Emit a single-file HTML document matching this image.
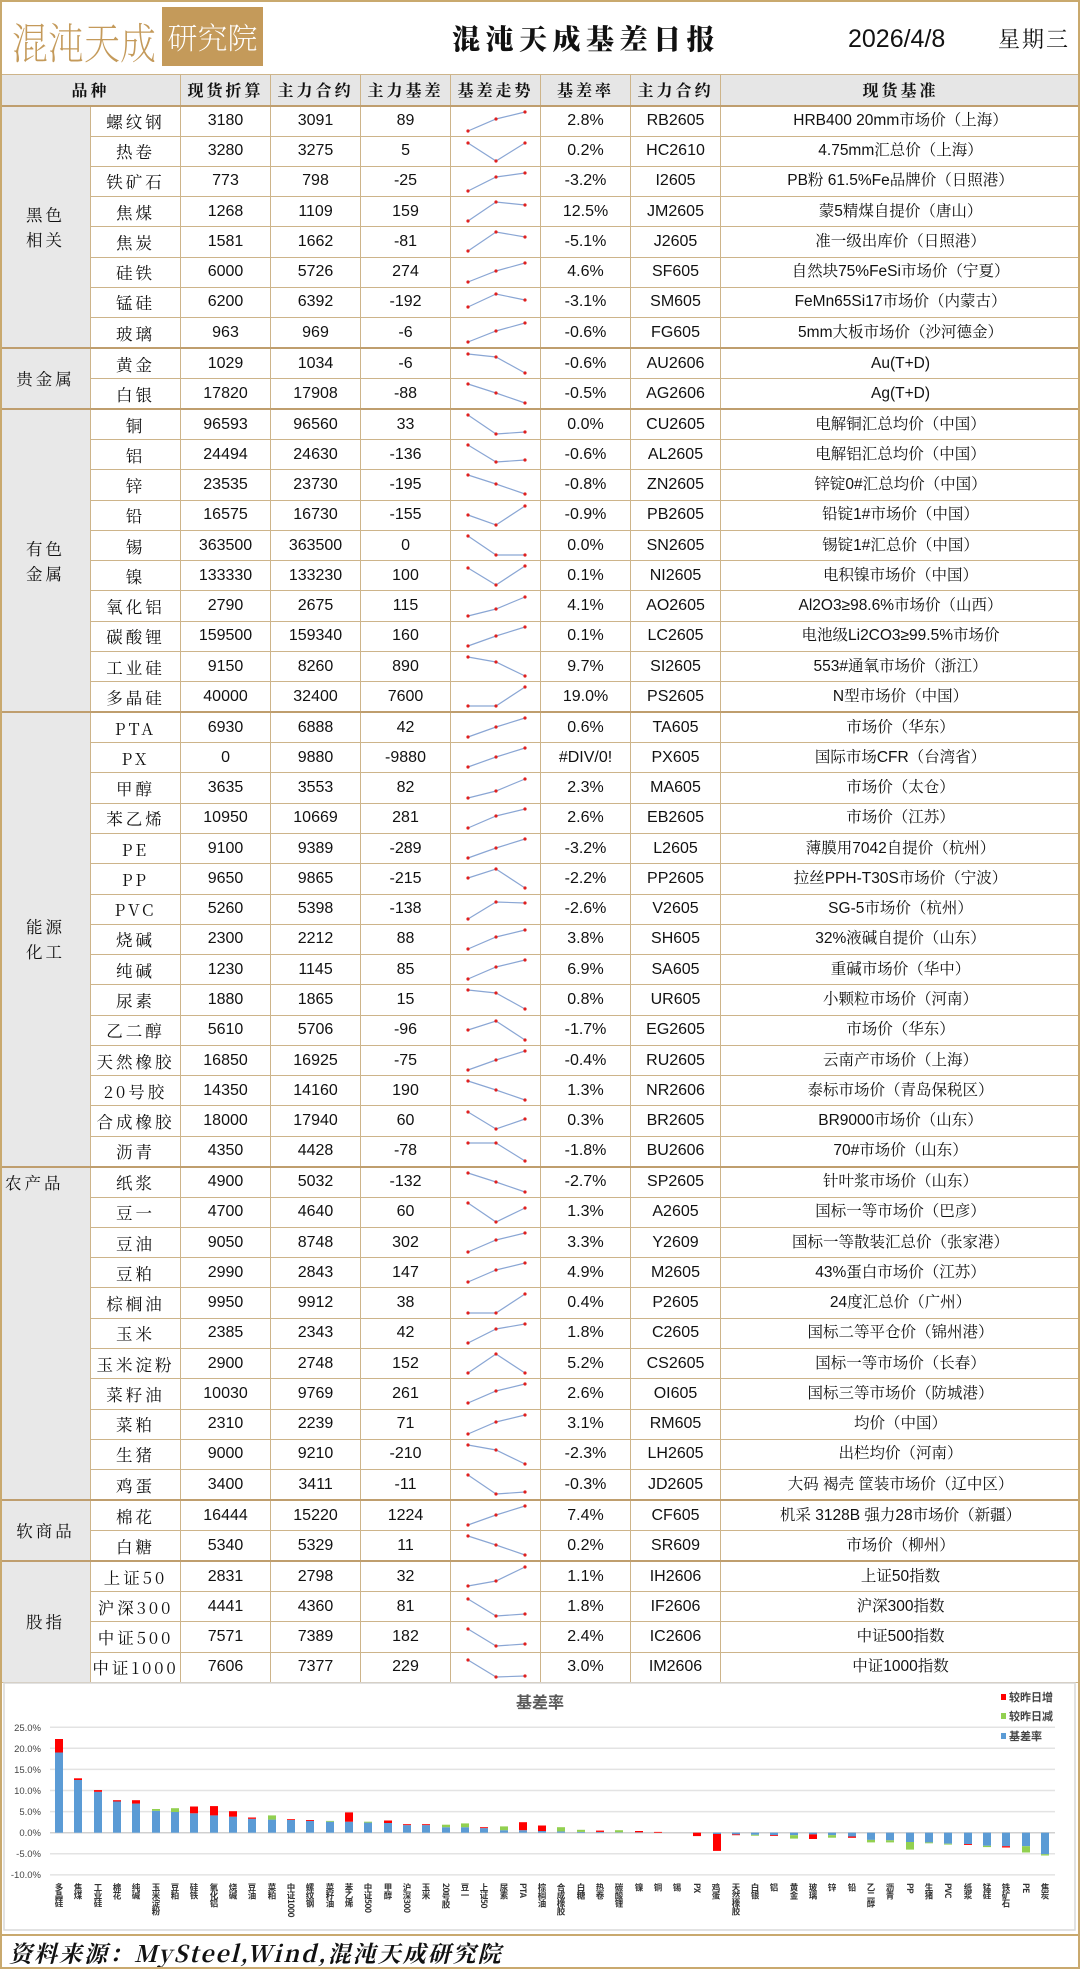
<!DOCTYPE html>
<html><head><meta charset="utf-8">
<style>
*{margin:0;padding:0;box-sizing:border-box}
body{width:1080px;height:1969px;background:#fff;position:relative;overflow:hidden;font-family:"Liberation Sans","Noto Sans CJK SC",sans-serif;color:#111}
#frame{position:absolute;left:0;top:0;width:1080px;height:1969px;border:2px solid #c9a96e;pointer-events:none;z-index:5}
.logo1{position:absolute;left:12px;top:12px;font-family:"Noto Serif CJK SC",serif;font-size:36px;font-weight:200;color:#c49a5a;letter-spacing:0;line-height:50px;transform:scaleY(1.2);transform-origin:top}
.logo2{position:absolute;left:162px;top:7px;width:101px;height:59px;background:#c49a5a;color:#fff;font-family:"Noto Serif CJK SC",serif;font-size:30px;font-weight:200;line-height:59px;text-align:center;letter-spacing:0}
.title{position:absolute;left:452px;top:18px;font-family:"Noto Serif CJK SC",serif;font-weight:900;font-size:28px;letter-spacing:5.5px;line-height:40px}
.date{position:absolute;left:848px;top:22px;font-size:25px;line-height:34px}
.week{position:absolute;left:998px;top:22px;font-family:"Noto Serif CJK SC",serif;font-size:22px;line-height:34px;letter-spacing:2px}
table{position:absolute;left:0;top:74px;width:1080px;border-collapse:collapse;table-layout:fixed}
td,th{border:1.5px solid #cdb48a;text-align:center;vertical-align:middle;font-size:16px;white-space:nowrap;overflow:hidden;padding:0;line-height:18px}
th{height:31px;background:#e6e6e6;font-family:"Noto Serif CJK SC",serif;font-weight:700;font-size:16px;letter-spacing:3px}
tbody tr{height:30.27px}
td.n{font-family:"Noto Serif CJK SC",serif;letter-spacing:3px;font-size:16.5px}
td.c{background:#e8e8e8;font-family:"Noto Serif CJK SC",serif;font-size:16.5px;letter-spacing:3px;line-height:25px}
td.b{font-family:"Liberation Sans","Noto Serif CJK SC",sans-serif;font-size:15.5px}
tr.g td{border-top:2.5px solid #bf9e6e}
td.t svg{display:block;width:90px;height:29px}
td.t polyline{fill:none;stroke:#8aa6d4;stroke-width:1.2;marker-start:url(#m);marker-mid:url(#m);marker-end:url(#m)}
.chart{position:absolute;left:0;top:1682px}
.foot{position:absolute;left:9px;top:1938px;font-family:"Noto Serif CJK SC",serif;font-style:italic;font-weight:700;font-size:23px;letter-spacing:2px;line-height:30px}
.fl{position:absolute;left:0;top:1934px;width:1080px;border-top:2px solid #c9a96e}
</style></head><body>
<svg width="0" height="0" style="position:absolute"><defs><marker id="m" markerWidth="4" markerHeight="4" refX="2" refY="2" markerUnits="userSpaceOnUse"><circle cx="2" cy="2" r="1.6" fill="#e0201f"/></marker></defs></svg>
<div id="frame"></div>
<div class="logo1">混沌天成</div>
<div class="logo2">研究院</div>
<div class="title">混沌天成基差日报</div>
<div class="date">2026/4/8</div>
<div class="week">星期三</div>
<table>
<colgroup><col style="width:90px"><col style="width:90px"><col style="width:90px"><col style="width:90px"><col style="width:90px"><col style="width:90px"><col style="width:90px"><col style="width:90px"><col style="width:360px"></colgroup>
<thead><tr><th colspan="2">品种</th><th>现货折算</th><th>主力合约</th><th>主力基差</th><th>基差走势</th><th>基差率</th><th>主力合约</th><th>现货基准</th></tr></thead>
<tbody>
<tr class="g"><td class="c" rowspan="8">黑色<br>相关</td><td class="n">螺纹钢</td><td>3180</td><td>3091</td><td>89</td><td class="t"><svg viewBox="0 0 90 29"><polyline points="17,24 45,12 74,5"/></svg></td><td>2.8%</td><td>RB2605</td><td class="b">HRB400 20mm市场价（上海）</td></tr>
<tr><td class="n">热卷</td><td>3280</td><td>3275</td><td>5</td><td class="t"><svg viewBox="0 0 90 29"><polyline points="17,6 45,24 74,6"/></svg></td><td>0.2%</td><td>HC2610</td><td class="b">4.75mm汇总价（上海）</td></tr>
<tr><td class="n">铁矿石</td><td>773</td><td>798</td><td>-25</td><td class="t"><svg viewBox="0 0 90 29"><polyline points="17,24 45,10 74,6"/></svg></td><td>-3.2%</td><td>I2605</td><td class="b">PB粉 61.5%Fe品牌价（日照港）</td></tr>
<tr><td class="n">焦煤</td><td>1268</td><td>1109</td><td>159</td><td class="t"><svg viewBox="0 0 90 29"><polyline points="17,24 45,5 74,8"/></svg></td><td>12.5%</td><td>JM2605</td><td class="b">蒙5精煤自提价（唐山）</td></tr>
<tr><td class="n">焦炭</td><td>1581</td><td>1662</td><td>-81</td><td class="t"><svg viewBox="0 0 90 29"><polyline points="17,24 45,5 74,10"/></svg></td><td>-5.1%</td><td>J2605</td><td class="b">准一级出库价（日照港）</td></tr>
<tr><td class="n">硅铁</td><td>6000</td><td>5726</td><td>274</td><td class="t"><svg viewBox="0 0 90 29"><polyline points="17,24 45,13 74,5"/></svg></td><td>4.6%</td><td>SF605</td><td class="b">自然块75%FeSi市场价（宁夏）</td></tr>
<tr><td class="n">锰硅</td><td>6200</td><td>6392</td><td>-192</td><td class="t"><svg viewBox="0 0 90 29"><polyline points="17,19 45,6 74,12"/></svg></td><td>-3.1%</td><td>SM605</td><td class="b">FeMn65Si17市场价（内蒙古）</td></tr>
<tr><td class="n">玻璃</td><td>963</td><td>969</td><td>-6</td><td class="t"><svg viewBox="0 0 90 29"><polyline points="17,24 45,13 74,5"/></svg></td><td>-0.6%</td><td>FG605</td><td class="b">5mm大板市场价（沙河德金）</td></tr>
<tr class="g"><td class="c" rowspan="2">贵金属</td><td class="n">黄金</td><td>1029</td><td>1034</td><td>-6</td><td class="t"><svg viewBox="0 0 90 29"><polyline points="17,5 45,8 74,24"/></svg></td><td>-0.6%</td><td>AU2606</td><td class="b">Au(T+D)</td></tr>
<tr><td class="n">白银</td><td>17820</td><td>17908</td><td>-88</td><td class="t"><svg viewBox="0 0 90 29"><polyline points="17,5 45,14 74,24"/></svg></td><td>-0.5%</td><td>AG2606</td><td class="b">Ag(T+D)</td></tr>
<tr class="g"><td class="c" rowspan="10">有色<br>金属</td><td class="n">铜</td><td>96593</td><td>96560</td><td>33</td><td class="t"><svg viewBox="0 0 90 29"><polyline points="17,5 45,24 74,22"/></svg></td><td>0.0%</td><td>CU2605</td><td class="b">电解铜汇总均价（中国）</td></tr>
<tr><td class="n">铝</td><td>24494</td><td>24630</td><td>-136</td><td class="t"><svg viewBox="0 0 90 29"><polyline points="17,5 45,22 74,20"/></svg></td><td>-0.6%</td><td>AL2605</td><td class="b">电解铝汇总均价（中国）</td></tr>
<tr><td class="n">锌</td><td>23535</td><td>23730</td><td>-195</td><td class="t"><svg viewBox="0 0 90 29"><polyline points="17,5 45,14 74,24"/></svg></td><td>-0.8%</td><td>ZN2605</td><td class="b">锌锭0#汇总均价（中国）</td></tr>
<tr><td class="n">铅</td><td>16575</td><td>16730</td><td>-155</td><td class="t"><svg viewBox="0 0 90 29"><polyline points="17,14 45,24 74,5"/></svg></td><td>-0.9%</td><td>PB2605</td><td class="b">铅锭1#市场价（中国）</td></tr>
<tr><td class="n">锡</td><td>363500</td><td>363500</td><td>0</td><td class="t"><svg viewBox="0 0 90 29"><polyline points="17,5 45,24 74,24"/></svg></td><td>0.0%</td><td>SN2605</td><td class="b">锡锭1#汇总价（中国）</td></tr>
<tr><td class="n">镍</td><td>133330</td><td>133230</td><td>100</td><td class="t"><svg viewBox="0 0 90 29"><polyline points="17,7 45,24 74,5"/></svg></td><td>0.1%</td><td>NI2605</td><td class="b">电积镍市场价（中国）</td></tr>
<tr><td class="n">氧化铝</td><td>2790</td><td>2675</td><td>115</td><td class="t"><svg viewBox="0 0 90 29"><polyline points="17,24 45,17 74,5"/></svg></td><td>4.1%</td><td>AO2605</td><td class="b">Al2O3≥98.6%市场价（山西）</td></tr>
<tr><td class="n">碳酸锂</td><td>159500</td><td>159340</td><td>160</td><td class="t"><svg viewBox="0 0 90 29"><polyline points="17,24 45,14 74,5"/></svg></td><td>0.1%</td><td>LC2605</td><td class="b">电池级Li2CO3≥99.5%市场价</td></tr>
<tr><td class="n">工业硅</td><td>9150</td><td>8260</td><td>890</td><td class="t"><svg viewBox="0 0 90 29"><polyline points="17,5 45,10 74,24"/></svg></td><td>9.7%</td><td>SI2605</td><td class="b">553#通氧市场价（浙江）</td></tr>
<tr><td class="n">多晶硅</td><td>40000</td><td>32400</td><td>7600</td><td class="t"><svg viewBox="0 0 90 29"><polyline points="17,24 45,24 74,5"/></svg></td><td>19.0%</td><td>PS2605</td><td class="b">N型市场价（中国）</td></tr>
<tr class="g"><td class="c" rowspan="15">能源<br>化工</td><td class="n">PTA</td><td>6930</td><td>6888</td><td>42</td><td class="t"><svg viewBox="0 0 90 29"><polyline points="17,24 45,14 74,5"/></svg></td><td>0.6%</td><td>TA605</td><td class="b">市场价（华东）</td></tr>
<tr><td class="n">PX</td><td>0</td><td>9880</td><td>-9880</td><td class="t"><svg viewBox="0 0 90 29"><polyline points="17,24 45,14 74,5"/></svg></td><td>#DIV/0!</td><td>PX605</td><td class="b">国际市场CFR（台湾省）</td></tr>
<tr><td class="n">甲醇</td><td>3635</td><td>3553</td><td>82</td><td class="t"><svg viewBox="0 0 90 29"><polyline points="17,24 45,17 74,5"/></svg></td><td>2.3%</td><td>MA605</td><td class="b">市场价（太仓）</td></tr>
<tr><td class="n">苯乙烯</td><td>10950</td><td>10669</td><td>281</td><td class="t"><svg viewBox="0 0 90 29"><polyline points="17,24 45,12 74,5"/></svg></td><td>2.6%</td><td>EB2605</td><td class="b">市场价（江苏）</td></tr>
<tr><td class="n">PE</td><td>9100</td><td>9389</td><td>-289</td><td class="t"><svg viewBox="0 0 90 29"><polyline points="17,24 45,14 74,5"/></svg></td><td>-3.2%</td><td>L2605</td><td class="b">薄膜用7042自提价（杭州）</td></tr>
<tr><td class="n">PP</td><td>9650</td><td>9865</td><td>-215</td><td class="t"><svg viewBox="0 0 90 29"><polyline points="17,14 45,5 74,24"/></svg></td><td>-2.2%</td><td>PP2605</td><td class="b">拉丝PPH-T30S市场价（宁波）</td></tr>
<tr><td class="n">PVC</td><td>5260</td><td>5398</td><td>-138</td><td class="t"><svg viewBox="0 0 90 29"><polyline points="17,24 45,7 74,8"/></svg></td><td>-2.6%</td><td>V2605</td><td class="b">SG-5市场价（杭州）</td></tr>
<tr><td class="n">烧碱</td><td>2300</td><td>2212</td><td>88</td><td class="t"><svg viewBox="0 0 90 29"><polyline points="17,24 45,12 74,5"/></svg></td><td>3.8%</td><td>SH605</td><td class="b">32%液碱自提价（山东）</td></tr>
<tr><td class="n">纯碱</td><td>1230</td><td>1145</td><td>85</td><td class="t"><svg viewBox="0 0 90 29"><polyline points="17,24 45,12 74,5"/></svg></td><td>6.9%</td><td>SA605</td><td class="b">重碱市场价（华中）</td></tr>
<tr><td class="n">尿素</td><td>1880</td><td>1865</td><td>15</td><td class="t"><svg viewBox="0 0 90 29"><polyline points="17,5 45,8 74,24"/></svg></td><td>0.8%</td><td>UR605</td><td class="b">小颗粒市场价（河南）</td></tr>
<tr><td class="n">乙二醇</td><td>5610</td><td>5706</td><td>-96</td><td class="t"><svg viewBox="0 0 90 29"><polyline points="17,14 45,5 74,24"/></svg></td><td>-1.7%</td><td>EG2605</td><td class="b">市场价（华东）</td></tr>
<tr><td class="n">天然橡胶</td><td>16850</td><td>16925</td><td>-75</td><td class="t"><svg viewBox="0 0 90 29"><polyline points="17,24 45,14 74,5"/></svg></td><td>-0.4%</td><td>RU2605</td><td class="b">云南产市场价（上海）</td></tr>
<tr><td class="n">20号胶</td><td>14350</td><td>14160</td><td>190</td><td class="t"><svg viewBox="0 0 90 29"><polyline points="17,5 45,14 74,24"/></svg></td><td>1.3%</td><td>NR2606</td><td class="b">泰标市场价（青岛保税区）</td></tr>
<tr><td class="n">合成橡胶</td><td>18000</td><td>17940</td><td>60</td><td class="t"><svg viewBox="0 0 90 29"><polyline points="17,5 45,22 74,12"/></svg></td><td>0.3%</td><td>BR2605</td><td class="b">BR9000市场价（山东）</td></tr>
<tr><td class="n">沥青</td><td>4350</td><td>4428</td><td>-78</td><td class="t"><svg viewBox="0 0 90 29"><polyline points="17,6 45,6 74,24"/></svg></td><td>-1.8%</td><td>BU2606</td><td class="b">70#市场价（山东）</td></tr>
<tr class="g"><td class="c" rowspan="11" style="vertical-align:top;text-align:left;padding:2px 0 0 4px">农产品</td><td class="n">纸浆</td><td>4900</td><td>5032</td><td>-132</td><td class="t"><svg viewBox="0 0 90 29"><polyline points="17,5 45,14 74,24"/></svg></td><td>-2.7%</td><td>SP2605</td><td class="b">针叶浆市场价（山东）</td></tr>
<tr><td class="n">豆一</td><td>4700</td><td>4640</td><td>60</td><td class="t"><svg viewBox="0 0 90 29"><polyline points="17,5 45,24 74,10"/></svg></td><td>1.3%</td><td>A2605</td><td class="b">国标一等市场价（巴彦）</td></tr>
<tr><td class="n">豆油</td><td>9050</td><td>8748</td><td>302</td><td class="t"><svg viewBox="0 0 90 29"><polyline points="17,24 45,12 74,5"/></svg></td><td>3.3%</td><td>Y2609</td><td class="b">国标一等散装汇总价（张家港）</td></tr>
<tr><td class="n">豆粕</td><td>2990</td><td>2843</td><td>147</td><td class="t"><svg viewBox="0 0 90 29"><polyline points="17,24 45,12 74,5"/></svg></td><td>4.9%</td><td>M2605</td><td class="b">43%蛋白市场价（江苏）</td></tr>
<tr><td class="n">棕榈油</td><td>9950</td><td>9912</td><td>38</td><td class="t"><svg viewBox="0 0 90 29"><polyline points="17,24 45,24 74,5"/></svg></td><td>0.4%</td><td>P2605</td><td class="b">24度汇总价（广州）</td></tr>
<tr><td class="n">玉米</td><td>2385</td><td>2343</td><td>42</td><td class="t"><svg viewBox="0 0 90 29"><polyline points="17,24 45,10 74,5"/></svg></td><td>1.8%</td><td>C2605</td><td class="b">国标二等平仓价（锦州港）</td></tr>
<tr><td class="n">玉米淀粉</td><td>2900</td><td>2748</td><td>152</td><td class="t"><svg viewBox="0 0 90 29"><polyline points="17,24 45,5 74,24"/></svg></td><td>5.2%</td><td>CS2605</td><td class="b">国标一等市场价（长春）</td></tr>
<tr><td class="n">菜籽油</td><td>10030</td><td>9769</td><td>261</td><td class="t"><svg viewBox="0 0 90 29"><polyline points="17,24 45,12 74,5"/></svg></td><td>2.6%</td><td>OI605</td><td class="b">国标三等市场价（防城港）</td></tr>
<tr><td class="n">菜粕</td><td>2310</td><td>2239</td><td>71</td><td class="t"><svg viewBox="0 0 90 29"><polyline points="17,24 45,12 74,5"/></svg></td><td>3.1%</td><td>RM605</td><td class="b">均价（中国）</td></tr>
<tr><td class="n">生猪</td><td>9000</td><td>9210</td><td>-210</td><td class="t"><svg viewBox="0 0 90 29"><polyline points="17,5 45,10 74,24"/></svg></td><td>-2.3%</td><td>LH2605</td><td class="b">出栏均价（河南）</td></tr>
<tr><td class="n">鸡蛋</td><td>3400</td><td>3411</td><td>-11</td><td class="t"><svg viewBox="0 0 90 29"><polyline points="17,5 45,24 74,22"/></svg></td><td>-0.3%</td><td>JD2605</td><td class="b">大码 褐壳 筐装市场价（辽中区）</td></tr>
<tr class="g"><td class="c" rowspan="2">软商品</td><td class="n">棉花</td><td>16444</td><td>15220</td><td>1224</td><td class="t"><svg viewBox="0 0 90 29"><polyline points="17,24 45,14 74,5"/></svg></td><td>7.4%</td><td>CF605</td><td class="b">机采 3128B 强力28市场价（新疆）</td></tr>
<tr><td class="n">白糖</td><td>5340</td><td>5329</td><td>11</td><td class="t"><svg viewBox="0 0 90 29"><polyline points="17,5 45,14 74,24"/></svg></td><td>0.2%</td><td>SR609</td><td class="b">市场价（柳州）</td></tr>
<tr class="g"><td class="c" rowspan="4">股指</td><td class="n">上证50</td><td>2831</td><td>2798</td><td>32</td><td class="t"><svg viewBox="0 0 90 29"><polyline points="17,24 45,19 74,5"/></svg></td><td>1.1%</td><td>IH2606</td><td class="b">上证50指数</td></tr>
<tr><td class="n">沪深300</td><td>4441</td><td>4360</td><td>81</td><td class="t"><svg viewBox="0 0 90 29"><polyline points="17,7 45,24 74,22"/></svg></td><td>1.8%</td><td>IF2606</td><td class="b">沪深300指数</td></tr>
<tr><td class="n">中证500</td><td>7571</td><td>7389</td><td>182</td><td class="t"><svg viewBox="0 0 90 29"><polyline points="17,7 45,24 74,22"/></svg></td><td>2.4%</td><td>IC2606</td><td class="b">中证500指数</td></tr>
<tr><td class="n">中证1000</td><td>7606</td><td>7377</td><td>229</td><td class="t"><svg viewBox="0 0 90 29"><polyline points="17,7 45,24 74,23"/></svg></td><td>3.0%</td><td>IM2606</td><td class="b">中证1000指数</td></tr>
</tbody></table>

<svg class="chart" width="1080" height="252" viewBox="0 0 1080 252" font-family="Liberation Sans, Noto Sans CJK SC, sans-serif">
<rect x="4" y="1" width="1071" height="247" fill="#fff" stroke="#d9d9d9" stroke-width="1.5"/>
<text x="540" y="26" text-anchor="middle" font-size="16" font-weight="700" fill="#595959" font-family="Noto Sans CJK SC, sans-serif">基差率</text>
<g stroke="#e3e3e3" stroke-width="1.5">
<line x1="50" x2="1055" y1="45.2" y2="45.2"/><line x1="50" x2="1055" y1="66.3" y2="66.3"/><line x1="50" x2="1055" y1="87.4" y2="87.4"/><line x1="50" x2="1055" y1="108.5" y2="108.5"/><line x1="50" x2="1055" y1="129.6" y2="129.6"/><line x1="50" x2="1055" y1="150.7" y2="150.7" stroke="#d0d0d0"/><line x1="50" x2="1055" y1="171.8" y2="171.8"/><line x1="50" x2="1055" y1="192.9" y2="192.9"/>
</g>
<g font-size="9.5" fill="#444" text-anchor="end">
<text x="41" y="49">25.0%</text><text x="41" y="70">20.0%</text><text x="41" y="91">15.0%</text><text x="41" y="112">10.0%</text><text x="41" y="133">5.0%</text><text x="41" y="154">0.0%</text><text x="41" y="175">-5.0%</text><text x="41" y="196">-10.0%</text>
</g>
<g>
<rect x="55" y="70.5" width="8" height="80.2" fill="#5b9bd5"/><rect x="55" y="57" width="8" height="13.5" fill="#f00"/>
<rect x="74" y="98" width="8" height="52.7" fill="#5b9bd5"/><rect x="74" y="96.3" width="8" height="1.7" fill="#f00"/>
<rect x="94" y="109.8" width="8" height="40.9" fill="#5b9bd5"/><rect x="94" y="108.1" width="8" height="1.7" fill="#f00"/>
<rect x="113" y="119.5" width="8" height="31.2" fill="#5b9bd5"/><rect x="113" y="118.2" width="8" height="1.3" fill="#f00"/>
<rect x="132" y="121.6" width="8" height="29.1" fill="#5b9bd5"/><rect x="132" y="118.2" width="8" height="3.4" fill="#f00"/>
<rect x="152" y="128.8" width="8" height="21.9" fill="#5b9bd5"/><rect x="152" y="127" width="8" height="1.8" fill="#92d050"/>
<rect x="171" y="130" width="8" height="20.7" fill="#5b9bd5"/><rect x="171" y="126.2" width="8" height="3.8" fill="#92d050"/>
<rect x="190" y="131.3" width="8" height="19.4" fill="#5b9bd5"/><rect x="190" y="124.5" width="8" height="6.8" fill="#f00"/>
<rect x="210" y="133.4" width="8" height="17.3" fill="#5b9bd5"/><rect x="210" y="124.1" width="8" height="9.3" fill="#f00"/>
<rect x="229" y="134.7" width="8" height="16" fill="#5b9bd5"/><rect x="229" y="129.2" width="8" height="5.5" fill="#f00"/>
<rect x="248" y="136.8" width="8" height="13.9" fill="#5b9bd5"/><rect x="248" y="135.5" width="8" height="1.3" fill="#f00"/>
<rect x="268" y="137.6" width="8" height="13.1" fill="#5b9bd5"/><rect x="268" y="133.4" width="8" height="4.2" fill="#92d050"/>
<rect x="287" y="138" width="8" height="12.7" fill="#5b9bd5"/><rect x="287" y="137.2" width="8" height="0.8" fill="#f00"/>
<rect x="306" y="138.9" width="8" height="11.8" fill="#5b9bd5"/><rect x="306" y="138" width="8" height="0.9" fill="#f00"/>
<rect x="326" y="139.7" width="8" height="11" fill="#5b9bd5"/><rect x="326" y="138.9" width="8" height="0.8" fill="#92d050"/>
<rect x="345" y="139.7" width="8" height="11" fill="#5b9bd5"/><rect x="345" y="130.4" width="8" height="9.3" fill="#f00"/>
<rect x="364" y="140.6" width="8" height="10.1" fill="#5b9bd5"/><rect x="364" y="139.7" width="8" height="0.9" fill="#92d050"/>
<rect x="384" y="141" width="8" height="9.7" fill="#5b9bd5"/><rect x="384" y="138.5" width="8" height="2.5" fill="#f00"/>
<rect x="403" y="143.1" width="8" height="7.6" fill="#5b9bd5"/><rect x="403" y="142.2" width="8" height="0.9" fill="#f00"/>
<rect x="422" y="143.1" width="8" height="7.6" fill="#5b9bd5"/><rect x="422" y="142.2" width="8" height="0.9" fill="#f00"/>
<rect x="442" y="145.2" width="8" height="5.5" fill="#5b9bd5"/><rect x="442" y="142.7" width="8" height="2.5" fill="#92d050"/>
<rect x="461" y="145.2" width="8" height="5.5" fill="#5b9bd5"/><rect x="461" y="141.4" width="8" height="3.8" fill="#92d050"/>
<rect x="480" y="146.1" width="8" height="4.6" fill="#5b9bd5"/><rect x="480" y="145.2" width="8" height="0.9" fill="#f00"/>
<rect x="500" y="148.2" width="8" height="2.5" fill="#5b9bd5"/><rect x="500" y="144.4" width="8" height="3.8" fill="#92d050"/>
<rect x="519" y="148.2" width="8" height="2.5" fill="#5b9bd5"/><rect x="519" y="140.2" width="8" height="8" fill="#f00"/>
<rect x="538" y="149" width="8" height="1.7" fill="#5b9bd5"/><rect x="538" y="143.5" width="8" height="5.5" fill="#f00"/>
<rect x="557" y="149.4" width="8" height="1.3" fill="#5b9bd5"/><rect x="557" y="145.2" width="8" height="4.2" fill="#92d050"/>
<rect x="577" y="149.9" width="8" height="0.8" fill="#5b9bd5"/><rect x="577" y="147.8" width="8" height="2.1" fill="#92d050"/>
<rect x="596" y="149.9" width="8" height="0.8" fill="#5b9bd5"/><rect x="596" y="148.6" width="8" height="1.3" fill="#f00"/>
<rect x="615" y="150.3" width="8" height="0.4" fill="#5b9bd5"/><rect x="615" y="148.2" width="8" height="2.1" fill="#92d050"/>
<rect x="635" y="150.3" width="8" height="0.4" fill="#5b9bd5"/><rect x="635" y="149" width="8" height="1.3" fill="#f00"/>
<rect x="654" y="149.9" width="8" height="0.8" fill="#f00"/>
<rect x="693" y="150.7" width="8" height="3.4" fill="#f00"/>
<rect x="713" y="150.7" width="8" height="1.3" fill="#5b9bd5"/><rect x="713" y="152" width="8" height="16.9" fill="#f00"/>
<rect x="732" y="150.7" width="8" height="1.7" fill="#5b9bd5"/><rect x="732" y="152.4" width="8" height="0.8" fill="#f00"/>
<rect x="751" y="150.7" width="8" height="2.1" fill="#5b9bd5"/><rect x="751" y="152.8" width="8" height="0.9" fill="#92d050"/>
<rect x="770" y="150.7" width="8" height="2.5" fill="#5b9bd5"/><rect x="770" y="153.2" width="8" height="0.8" fill="#f00"/>
<rect x="790" y="150.7" width="8" height="2.5" fill="#5b9bd5"/><rect x="790" y="153.2" width="8" height="3.4" fill="#92d050"/>
<rect x="809" y="150.7" width="8" height="1.7" fill="#5b9bd5"/><rect x="809" y="152.4" width="8" height="4.6" fill="#f00"/>
<rect x="828" y="150.7" width="8" height="2.5" fill="#5b9bd5"/><rect x="828" y="153.2" width="8" height="2.5" fill="#92d050"/>
<rect x="848" y="150.7" width="8" height="3.8" fill="#5b9bd5"/><rect x="848" y="154.5" width="8" height="1.3" fill="#f00"/>
<rect x="867" y="150.7" width="8" height="7.2" fill="#5b9bd5"/><rect x="867" y="157.9" width="8" height="2.5" fill="#92d050"/>
<rect x="886" y="150.7" width="8" height="7.6" fill="#5b9bd5"/><rect x="886" y="158.3" width="8" height="2.1" fill="#92d050"/>
<rect x="906" y="150.7" width="8" height="9.3" fill="#5b9bd5"/><rect x="906" y="160" width="8" height="7.6" fill="#92d050"/>
<rect x="925" y="150.7" width="8" height="9.7" fill="#5b9bd5"/><rect x="925" y="160.4" width="8" height="0.9" fill="#92d050"/>
<rect x="944" y="150.7" width="8" height="11" fill="#5b9bd5"/><rect x="944" y="161.7" width="8" height="0.9" fill="#92d050"/>
<rect x="964" y="150.7" width="8" height="11.4" fill="#5b9bd5"/><rect x="964" y="162.1" width="8" height="0.9" fill="#f00"/>
<rect x="983" y="150.7" width="8" height="13.1" fill="#5b9bd5"/><rect x="983" y="163.8" width="8" height="1.3" fill="#92d050"/>
<rect x="1002" y="150.7" width="8" height="13.5" fill="#5b9bd5"/><rect x="1002" y="164.2" width="8" height="1.3" fill="#f00"/>
<rect x="1022" y="150.7" width="8" height="13.5" fill="#5b9bd5"/><rect x="1022" y="164.2" width="8" height="6.3" fill="#92d050"/>
<rect x="1041" y="150.7" width="8" height="21.5" fill="#5b9bd5"/><rect x="1041" y="172.2" width="8" height="1.3" fill="#92d050"/>
</g>
<g font-size="8.5" font-weight="700" fill="#333" font-family="Noto Sans CJK SC, sans-serif" style="writing-mode:vertical-rl" letter-spacing="-0.5">
<text x="59" y="201">多晶硅</text><text x="78" y="201">焦煤</text><text x="98" y="201">工业硅</text><text x="117" y="201">棉花</text><text x="136" y="201">纯碱</text><text x="156" y="201">玉米淀粉</text><text x="175" y="201">豆粕</text><text x="194" y="201">硅铁</text><text x="214" y="201">氧化铝</text><text x="233" y="201">烧碱</text><text x="252" y="201">豆油</text><text x="272" y="201">菜粕</text><text x="291" y="201">中证1000</text><text x="310" y="201">螺纹钢</text><text x="330" y="201">菜籽油</text><text x="349" y="201">苯乙烯</text><text x="368" y="201">中证500</text><text x="388" y="201">甲醇</text><text x="407" y="201">沪深300</text><text x="426" y="201">玉米</text><text x="446" y="201">20号胶</text><text x="465" y="201">豆一</text><text x="484" y="201">上证50</text><text x="504" y="201">尿素</text><text x="523" y="201">PTA</text><text x="542" y="201">棕榈油</text><text x="561" y="201">合成橡胶</text><text x="581" y="201">白糖</text><text x="600" y="201">热卷</text><text x="619" y="201">碳酸锂</text><text x="639" y="201">镍</text><text x="658" y="201">铜</text><text x="677" y="201">锡</text><text x="697" y="201">PX</text><text x="716" y="201">鸡蛋</text><text x="736" y="201">天然橡胶</text><text x="755" y="201">白银</text><text x="774" y="201">铝</text><text x="794" y="201">黄金</text><text x="813" y="201">玻璃</text><text x="832" y="201">锌</text><text x="852" y="201">铅</text><text x="871" y="201">乙二醇</text><text x="890" y="201">沥青</text><text x="910" y="201">PP</text><text x="929" y="201">生猪</text><text x="948" y="201">PVC</text><text x="968" y="201">纸浆</text><text x="987" y="201">锰硅</text><text x="1006" y="201">铁矿石</text><text x="1026" y="201">PE</text><text x="1045" y="201">焦炭</text>
</g>
<g font-size="11" font-weight="700" fill="#444" font-family="Noto Sans CJK SC, sans-serif">
<rect x="1001" y="12" width="5" height="6" fill="#f00"/><text x="1009" y="19">较昨日增</text>
<rect x="1001" y="31" width="5" height="6" fill="#92d050"/><text x="1009" y="38">较昨日减</text>
<rect x="1001" y="51" width="5" height="6" fill="#5b9bd5"/><text x="1009" y="58">基差率</text>
</g>
</svg>
<div class="fl"></div>
<div class="foot">资料来源：MySteel,Wind,混沌天成研究院</div>
</body></html>
